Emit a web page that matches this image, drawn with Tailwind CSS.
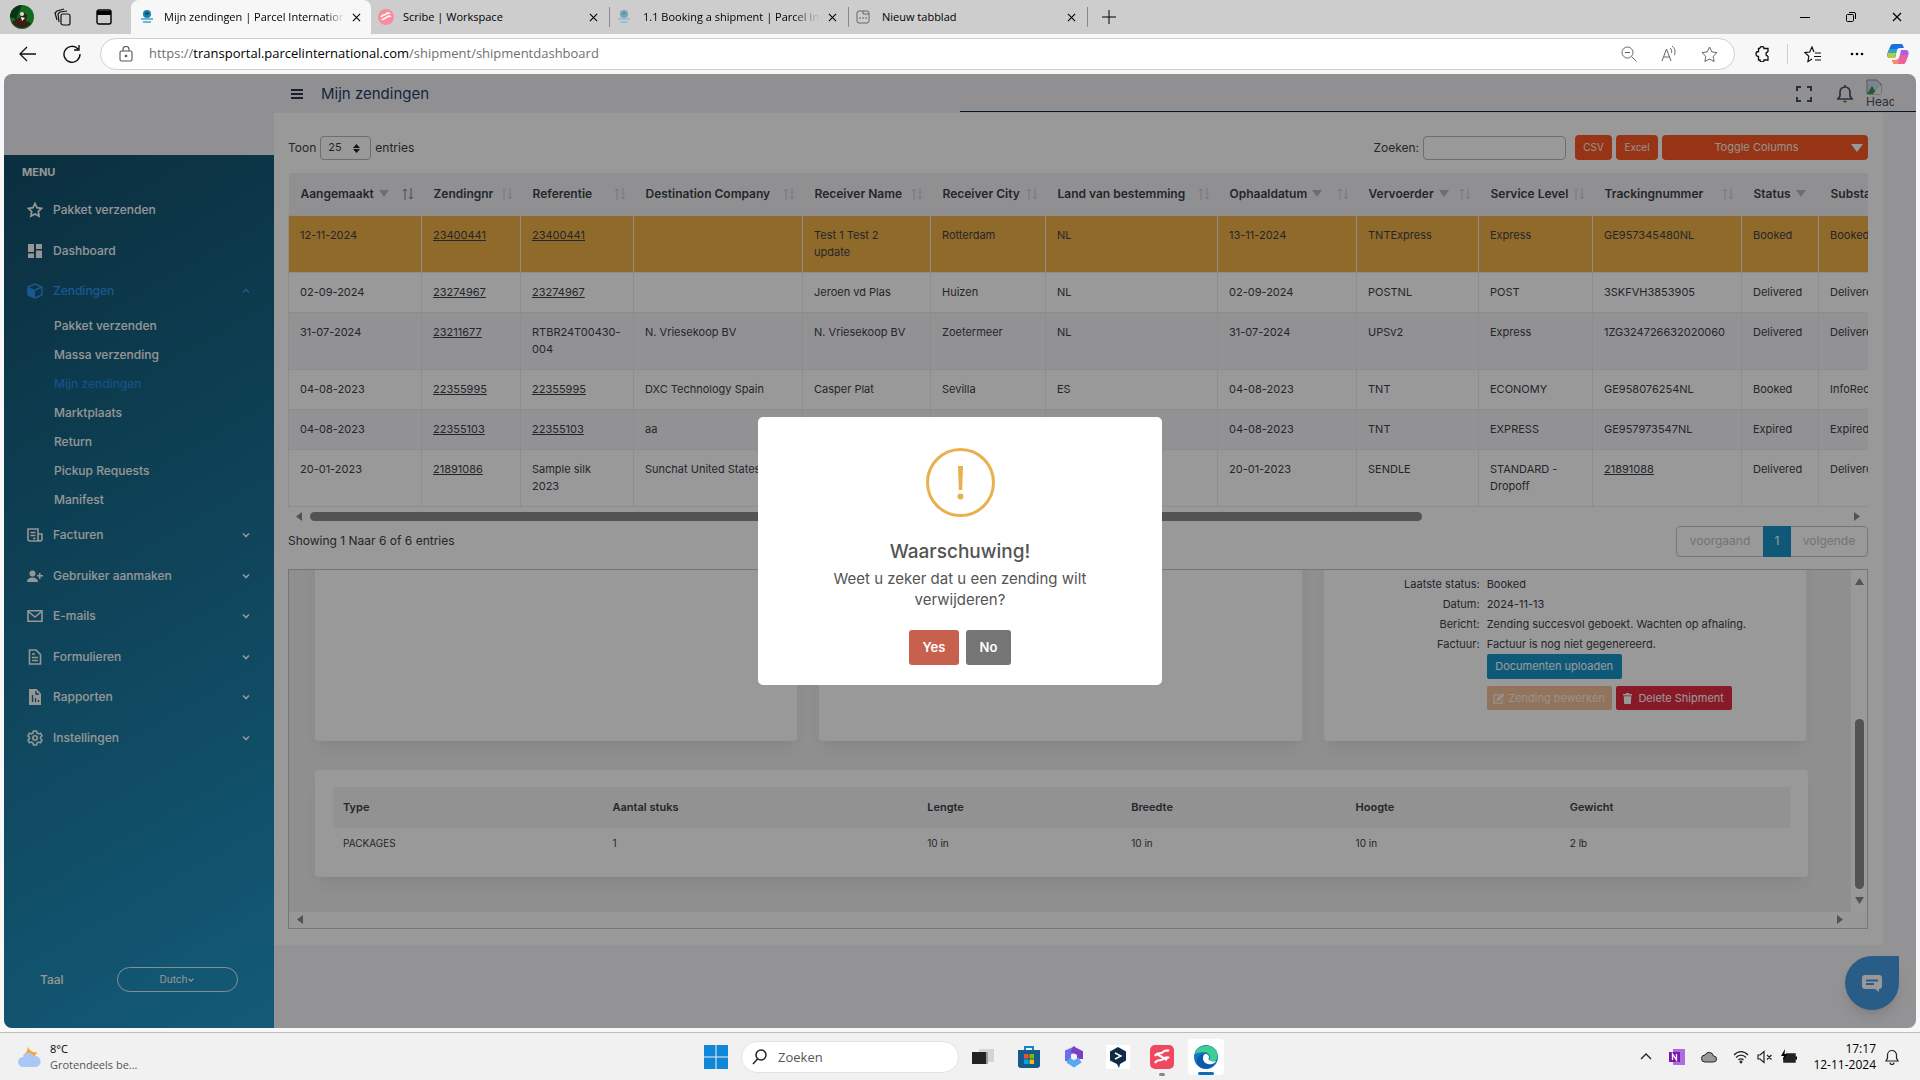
<!DOCTYPE html>
<html lang="nl">
<head>
    <meta charset="UTF-8">
    <meta name="viewport" content="width=device-width, initial-scale=1.0">
    <title>Mijn zendingen | Parcel International</title>
    <script src="https://cdn.jsdelivr.net/npm/@tailwindcss/browser@4"></script>
</head>
<body class="min-h-screen flex flex-col bg-[#f7f7f7] font-['Open_Sans','Noto_Sans',sans-serif] text-xs text-black">

    <!-- Shared icons -->
    <svg class="hidden">
        <symbol id="sort" viewBox="0 0 12 12"><path d="M3 12V1M1 3l2-2 2 2M9 0v11M7 9l2 2 2-2" fill="none" stroke="currentColor"/></symbol>
        <symbol id="chevron" viewBox="0 0 10 10"><path d="M2 3.5 5 6.5 8 3.5" fill="none" stroke="currentColor" stroke-width="1.6"/></symbol>
        <symbol id="close" viewBox="0 0 10 10"><path d="M1 1l8 8M9 1 1 9" fill="none" stroke="currentColor" stroke-width="1.2"/></symbol>
        <symbol id="parcel" viewBox="0 0 14 14"><circle cx="7" cy="4" r="4" fill="#1c7fae"/><path d="M5 3l3-1 1 2-3 1z" fill="#0b4564"/><path d="M1 9h12M3 12h8" stroke="#6fb6d8" stroke-width="2"/></symbol>
    </svg>

    <!-- Tab strip -->
    <div class="h-[34px] bg-[#cdcdcd] flex items-center text-[11px]">
        <div class="w-[131px] shrink-0 flex items-center gap-5 pl-[10px]">
            <svg class="w-6 h-6" viewBox="0 0 24 24"><circle cx="12" cy="12" r="12" fill="#126b22"/><path d="M2 18c3-4 5-5 8-5l3-6 4 3-1 6 5 2c-3 5-12 8-19 0z" fill="#3a1d14"/><circle cx="12" cy="9" r="2" fill="#ecdcd0"/><path d="M11 12l4 1-3 3z" fill="#fff"/><path d="M0 12a12 12 0 0 1 12-12L6 14z" fill="#0b3312"/></svg>
            <svg class="w-[18px] h-[18px]" viewBox="0 0 18 18" fill="none" stroke="#111" stroke-width="1.2"><rect x="7" y="6" width="9" height="11" rx="2"/><path d="M5 14l-1-8 2-2 7-1M3 12 1 5l2-2 7-2"/></svg>
            <svg class="w-4 h-4 ml-1" viewBox="0 0 16 16"><rect x="1" y="1" width="14" height="14" rx="2" fill="none" stroke="#000" stroke-width="1.4"/><path d="M1 2h14v4H1z"/></svg>
        </div>
        <div class="h-full w-[240px] shrink-0 bg-[#f7f7f7] rounded-t-lg flex items-center px-[9px]">
            <svg class="w-[14px] h-[14px] mr-[10px] shrink-0"><use href="#parcel"/></svg>
            <span class="flex-1 overflow-hidden whitespace-nowrap mask-r-from-90%">Mijn zendingen | Parcel International</span>
            <button class="ml-2 mr-px" aria-label="Tabblad sluiten"><svg class="w-[9px] h-[9px]"><use href="#close"/></svg></button>
        </div>
        <div class="h-5 w-[239px] shrink-0 border-r border-[#8a8a8a] flex items-center px-[7px]">
            <svg class="w-4 h-4 mr-[9px] shrink-0" viewBox="0 0 16 16"><circle cx="8" cy="8" r="8" fill="#f78ca0"/><path d="M3 8c2-3 3-1 5-3s3 0 4-1M4 11c2-2 3-1 5-3s3 0 4-1" stroke="#fff" stroke-width="1.6" fill="none"/></svg>
            <span class="flex-1">Scribe | Workspace</span>
            <button class="mr-1" aria-label="Tabblad sluiten"><svg class="w-[9px] h-[9px]"><use href="#close"/></svg></button>
        </div>
        <div class="h-5 w-[239px] shrink-0 border-r border-[#8a8a8a] flex items-center px-[7px]">
            <svg class="w-[14px] h-[14px] mr-3 shrink-0 opacity-50"><use href="#parcel"/></svg>
            <span class="flex-1 overflow-hidden whitespace-nowrap mask-r-from-85%">1.1 Booking a shipment | Parcel International</span>
            <button class="ml-2 mr-1" aria-label="Tabblad sluiten"><svg class="w-[9px] h-[9px]"><use href="#close"/></svg></button>
        </div>
        <div class="h-5 w-[239px] shrink-0 border-r border-[#8a8a8a] flex items-center px-[7px]">
            <svg class="w-[14px] h-[14px] mr-3 shrink-0" viewBox="0 0 14 14" fill="none" stroke="#666"><rect x="1" y="1" width="12" height="12" rx="2"/><path d="M7 1v3h6M3 8h2M6 8h2M9 8h2"/></svg>
            <span class="flex-1">Nieuw tabblad</span>
            <button class="mr-1" aria-label="Tabblad sluiten"><svg class="w-[9px] h-[9px]"><use href="#close"/></svg></button>
        </div>
        <button class="ml-[14px]" aria-label="Nieuw tabblad"><svg class="w-[14px] h-[14px]" viewBox="0 0 14 14" stroke="#000"><path d="M7 0v14M0 7h14"/></svg></button>
        <div class="ml-auto flex items-center gap-9 pr-[18px]">
            <button aria-label="Minimaliseren"><svg class="w-[10px] h-[10px]" viewBox="0 0 10 10" stroke="#000"><path d="M0 5.5h10"/></svg></button>
            <button aria-label="Verkleinen"><svg class="w-[10px] h-[10px]" viewBox="0 0 10 10" stroke="#000" fill="none"><rect x=".5" y="2.5" width="7" height="7" rx="1"/><path d="M3 .5h5a1.500 1.500 0 0 1 1.500 1.500v5"/></svg></button>
            <button aria-label="Sluiten"><svg class="w-[10px] h-[10px]"><use href="#close"/></svg></button>
        </div>
    </div>

    <!-- Address bar -->
    <div class="h-10 flex items-center">
        <div class="w-[100px] shrink-0 flex gap-[26px] pl-[19px]">
            <button aria-label="Terug"><svg class="w-[18px] h-4" viewBox="0 0 18 16" fill="none" stroke="#111" stroke-width="1.3"><path d="M17 8H1M8 1 1 8l7 7"/></svg></button>
            <button aria-label="Vernieuwen"><svg class="w-[18px] h-[18px]" viewBox="0 0 18 18" fill="none" stroke="#111" stroke-width="1.4"><path d="M15 4a8 8 0 1 0 2 5M16 0v5h-5"/></svg></button>
        </div>
        <div class="flex-1 h-8 bg-white border border-[#d0d0d0] rounded-full flex items-center pl-[18px] pr-4 text-[13px]">
            <svg class="w-[14px] h-4 mr-4" viewBox="0 0 14 16" fill="none" stroke="#555" stroke-width="1.1"><rect x="1" y="5" width="12" height="10" rx="1.500"/><path d="M4 5V3.500a3 3 0 0 1 6 0V5"/><circle cx="7" cy="10" r=".8" fill="#555"/></svg>
            <span class="flex-1 text-[#707070]">https://<span class="text-black">transportal.parcelinternational.com</span>/shipment/shipmentdashboard</span>
            <div class="flex items-center gap-6 text-[#666]">
                <svg class="w-4 h-4" viewBox="0 0 16 16" fill="none" stroke="currentColor"><circle cx="6.500" cy="6.500" r="5.500"/><path d="M10.500 10.500l5 5M4 6.500h5"/></svg>
                <svg class="w-4 h-4" viewBox="0 0 16 16" fill="none" stroke="currentColor"><path d="M1 15 5.500 3 10 15M2.500 11h6M9 2c1.500 1 2 3 1.500 5M11 0c3 2 3.500 5 2.500 9"/></svg>
                <svg class="w-[17px] h-[17px]" viewBox="0 0 17 17" fill="none" stroke="currentColor"><path d="M8.500 1l2.300 4.900 5.200.7-3.800 3.700.9 5.200-4.600-2.500-4.600 2.500.9-5.200L1 6.600l5.200-.7z"/></svg>
            </div>
        </div>
        <div class="flex items-center pl-5 pr-[11px]">
            <svg class="w-4 h-4" viewBox="0 0 16 16" fill="none" stroke="#111" stroke-width="1.300"><path d="M5 2.500a2 2 0 0 1 4 0h4V6M13 10v4H9a2 2 0 0 1-4 0H3.500v-3.500a2 2 0 0 1 0-5V2.500H5M13 6a2 2 0 0 0 0 4"/></svg>
            <div class="w-px h-5 bg-[#d0d0d0] mx-4"></div>
            <svg class="w-[17px] h-[17px]" viewBox="0 0 17 17" fill="none" stroke="#111" stroke-width="1.200"><path d="M10 6 8 1 5.700 6 1 6.600l3.800 3.700-.9 5.200L8 13M11 7h6M10 10.500h7M11 14h6"/></svg>
            <svg class="w-4 h-4 ml-7 mr-[22px]" viewBox="0 0 16 16"><circle cx="3" cy="8" r="1.300"/><circle cx="8" cy="8" r="1.300"/><circle cx="13" cy="8" r="1.300"/></svg>
            <svg class="w-[22px] h-[22px]" viewBox="0 0 22 22"><path d="M6 1h8c2 0 2 2 3 4h-4c-2 0-3 1-3.500 3L8 15H3C0 15 0 12 1 9l2-5c.6-2 1.500-3 3-3z" fill="#1c6fe0"/><path d="M2 6h8l-2 9H3C0 15 0 12 1 9z" fill="#28a6c8"/><path d="M1 10h8l-1 5H3c-2 0-3-2-2-5z" fill="#b9c83c"/><path d="M16 21H8c-2 0-2-2-3-4h4c2 0 3-1 3.500-3L14 7h5c3 0 3 3 2 6l-2 5c-.6 2-1.500 3-3 3z" fill="#a95fe8"/><path d="M13 12h8.300l-2.300 6c-.6 2-1.500 3-3 3H8c-2 0-2-2-3-4h4c2 0 3-1 3.500-3z" fill="#f0609a"/><path d="M5 17h4c2 0 3-1 3.500-3L11 21H8c-2 0-2-2-3-4z" fill="#fb8a5c"/></svg>
        </div>
    </div>

    <!-- Web page -->
    <div class="relative flex-1 flex mx-1 mb-1 rounded-lg overflow-hidden bg-[#f5f5f8] font-['Inter',sans-serif] text-[#3c4147]">

        <!-- Sidebar -->
        <aside class="w-[270px] shrink-0 flex flex-col bg-[#f1f1f4]">
            <div class="h-[81px]"></div>
            <nav class="flex-1 flex flex-col bg-linear-150 from-[#124f69] to-[#2098c8] text-[#fafafa] font-medium">
                <p class="h-[34px] pt-2 pl-[18px] text-[11px] leading-[18px] font-bold">MENU</p>
                <a href="#" class="h-[41px] flex items-center gap-[10px] px-[23px]">
                    <svg class="w-4 h-4" viewBox="0 0 16 16" fill="none" stroke="currentColor" stroke-width="1.700"><path d="M8 1.500l2 4.200 4.600.6-3.300 3.200.8 4.600L8 11.900l-4.100 2.200.8-4.600L1.400 6.300 6 5.700z"/></svg>
                    Pakket verzenden
                </a>
                <a href="#" class="h-[41px] flex items-center gap-[10px] px-[23px]">
                    <svg class="w-4 h-4" viewBox="0 0 16 16" fill="currentColor"><path d="M1 1h6v8H1zM9 1h6v5H9zM1 10.500h6V15H1zM9 7.500h6V15H9z"/></svg>
                    Dashboard
                </a>
                <a href="#" class="h-10 flex items-center gap-[10px] px-[23px] text-[#2b95f0]">
                    <svg class="w-4 h-4" viewBox="0 0 16 16"><path d="M8 1l7 3v8l-7 3-7-3V4z" fill="none" stroke="currentColor" stroke-width="1.400"/><path d="M1 4l7 3v8l-7-3z" fill="currentColor"/><path d="M8 7l7-3" stroke="currentColor" stroke-width="1.400"/></svg>
                    <span class="flex-1">Zendingen</span>
                    <svg class="w-[10px] h-[10px] rotate-180"><use href="#chevron"/></svg>
                </a>
                <ul class="pl-[50px] leading-[29px]">
                    <li><a href="#">Pakket verzenden</a></li>
                    <li><a href="#">Massa verzending</a></li>
                    <li><a href="#" class="text-[#2388e0]">Mijn zendingen</a></li>
                    <li><a href="#">Marktplaats</a></li>
                    <li><a href="#">Return</a></li>
                    <li><a href="#">Pickup Requests</a></li>
                    <li><a href="#">Manifest</a></li>
                </ul>
                <a href="#" class="h-[41px] flex items-center gap-[10px] px-[23px]">
                    <svg class="w-4 h-4" viewBox="0 0 16 16" fill="none" stroke="currentColor" stroke-width="1.600"><path d="M1 2h10v12H3a2 2 0 0 1-2-2zM11 7h4v5a2 2 0 0 1-4 0M3.500 5.500h5M3.500 8.500h5M6 11.500h2.500"/></svg>
                    <span class="flex-1">Facturen</span>
                    <svg class="w-[10px] h-[10px]"><use href="#chevron"/></svg>
                </a>
                <a href="#" class="h-[41px] flex items-center gap-[10px] px-[23px]">
                    <svg class="w-4 h-4" viewBox="0 0 16 16" fill="currentColor"><circle cx="5.500" cy="5.500" r="3"/><path d="M0 14c0-6 11-6 11 0zM12 5h1.500v2H16v1.500h-2.500V11H12V8.500h-2V7h2z"/></svg>
                    <span class="flex-1">Gebruiker aanmaken</span>
                    <svg class="w-[10px] h-[10px]"><use href="#chevron"/></svg>
                </a>
                <a href="#" class="h-10 flex items-center gap-[10px] px-[23px]">
                    <svg class="w-4 h-4" viewBox="0 0 16 16" fill="none" stroke="currentColor" stroke-width="1.600"><path d="M1 2.800h14v10.400H1zM2 4l6 5 6-5"/></svg>
                    <span class="flex-1">E-mails</span>
                    <svg class="w-[10px] h-[10px]"><use href="#chevron"/></svg>
                </a>
                <a href="#" class="h-[41px] flex items-center gap-[10px] px-[23px]">
                    <svg class="w-4 h-4" viewBox="0 0 16 16" fill="none" stroke="currentColor" stroke-width="1.600"><path d="M2.500 1H9l4.500 4.500V15h-11zM5 5h3M5 8.500h6M5 11.500h6"/></svg>
                    <span class="flex-1">Formulieren</span>
                    <svg class="w-[10px] h-[10px]"><use href="#chevron"/></svg>
                </a>
                <a href="#" class="h-10 flex items-center gap-[10px] px-[23px]">
                    <svg class="w-4 h-4" viewBox="0 0 16 16"><path d="M2 0h7.500L14 4.500V16H2z" fill="currentColor"/><path d="M5.500 6v7M8.500 9v4M11.500 11v2M9 2v3h3" fill="none" stroke="#1a6586" stroke-width="1.300"/></svg>
                    <span class="flex-1">Rapporten</span>
                    <svg class="w-[10px] h-[10px]"><use href="#chevron"/></svg>
                </a>
                <a href="#" class="h-[41px] flex items-center gap-[10px] px-[23px]">
                    <svg class="w-4 h-4" viewBox="0 0 16 16" fill="none" stroke="currentColor" stroke-width="1.600"><path d="M6.500 1h3l.5 2 1.500.9 2-.6L15 5.900 13.500 7.300v1.400L15 10.100l-1.500 2.600-2-.6L10 13l-.5 2h-3L6 13l-1.500-.9-2 .6L1 10.100l1.500-1.400V7.300L1 5.900l1.500-2.600 2 .6L6 3z"/><circle cx="8" cy="8" r="2.200"/></svg>
                    <span class="flex-1">Instellingen</span>
                    <svg class="w-[10px] h-[10px]"><use href="#chevron"/></svg>
                </a>
                <div class="mt-auto mb-9 pl-9 pr-9 flex items-center justify-between">
                    <span>Taal</span>
                    <button class="w-[121px] h-[25px] border border-[#e0f0f5] rounded-full flex items-center justify-center text-[10px] font-normal">Dutch <svg class="w-2 h-2"><use href="#chevron"/></svg></button>
                </div>
            </nav>
        </aside>

        <!-- Main column -->
        <main class="flex-1 min-w-0">
            <header class="h-[39px] flex items-center bg-[#f1f1f4] pl-[17px]">
                <button aria-label="Menu"><svg class="w-3 h-3" viewBox="0 0 12 12" stroke="#2b3350" stroke-width="2"><path d="M0 2h12M0 6h12M0 10h12"/></svg></button>
                <h1 class="ml-[18px] text-[15px] text-[#1f3d66]">Mijn zendingen</h1>
                <div class="ml-auto flex items-center gap-6 pr-[22px] text-[#4a4f5c]">
                    <svg class="w-4 h-4" viewBox="0 0 16 16" fill="none" stroke="currentColor" stroke-width="2"><path d="M1 5V1h4M11 1h4v4M15 11v4h-4M5 15H1v-4"/></svg>
                    <svg class="w-[18px] h-[18px]" viewBox="0 0 18 18" fill="none" stroke="currentColor" stroke-width="1.700"><path d="M2 14h14l-2-3V7A5 5 0 0 0 4 7v4zM7.500 16.500h3M9 2V0"/></svg>
                    <div class="w-7 -ml-3 overflow-hidden text-xs leading-[14px]">
                        <svg class="w-4 h-4" viewBox="0 0 16 16"><path d="M1 1h10l4 4v10H1z" fill="#c9dcf0" stroke="#8a8f96"/><path d="M1 15l5-8 5 8z" fill="#3a9a4a"/><path d="M15 6l-8 9h8z" fill="#f1f1f4"/></svg>
                        Header
                    </div>
                </div>
            </header>

            <div class="relative mr-[33px] bg-white pl-[14px] pr-[15px] pt-[22px] pb-4">
                <div class="absolute top-[-2px] left-[686px] right-[-33px] h-px bg-[#0c2746]"></div>

                <!-- Table toolbar -->
                <div class="flex items-center gap-1 h-[25px]">
                    <label for="page-size">Toon</label>
                    <div class="relative">
                        <select id="page-size" class="appearance-none w-[51px] h-6 border border-[#b5b8bd] rounded-sm pl-[7px] text-[11px] bg-white"><option>25</option></select>
                        <svg class="absolute right-[11px] top-2 w-[7px] h-[9px] pointer-events-none" viewBox="0 0 7 9"><path d="M3.500 0 7 4H0zM0 5h7L3.500 9z" fill="#222"/></svg>
                    </div>
                    <span>entries</span>
                    <label for="search" class="ml-auto">Zoeken:</label>
                    <input id="search" type="text" class="w-[143px] h-6 border border-[#b5b8bd] rounded-sm bg-white px-2">
                    <button class="ml-[5px] w-[37px] h-[25px] rounded-sm bg-[#fa5824] text-[#fff0ea] text-[10px]">CSV</button>
                    <button class="w-[42px] h-[25px] rounded-sm bg-[#fa5824] text-[#fff0ea] text-[10px]">Excel</button>
                    <button class="w-[206px] h-[25px] rounded-sm bg-[#fa5824] text-[#fff0ea] text-[11px] flex items-center pr-[5px]">
                        <span class="flex-1">Toggle Columns</span>
                        <svg class="w-3 h-2" viewBox="0 0 12 8"><path d="M0 0h12L6 8z" fill="#fff"/></svg>
                    </button>
                </div>

                <!-- Shipments -->
                <div class="mt-[13px] overflow-hidden">
                    <table class="table-fixed w-[1681px] border-collapse text-left text-[11px] leading-[17px] [&_td]:border [&_td]:border-[#ececef] [&_td]:px-[11px] [&_td]:py-[11px] [&_td]:align-top [&_th]:pl-3 [&_th]:pr-2 [&_th]:font-semibold [&_td_a]:underline">
                        <colgroup>
                            <col class="w-[133px]"><col class="w-[99px]"><col class="w-[113px]"><col class="w-[169px]"><col class="w-[128px]"><col class="w-[115px]"><col class="w-[172px]"><col class="w-[139px]"><col class="w-[122px]"><col class="w-[114px]"><col class="w-[149px]"><col class="w-[77px]"><col class="w-[151px]">
                        </colgroup>
                        <thead class="bg-[#f1f1f4] text-xs">
                            <tr class="h-[42px] whitespace-nowrap">
                                <th><div class="flex items-center">Aangemaakt<svg class="w-[10px] h-[7px] ml-[5px]" viewBox="0 0 10 7"><path d="M0 0h10L5 7z" fill="#b4b7bb"/></svg><svg class="w-3 h-3 ml-auto text-[#777b80]"><use href="#sort"/></svg></div></th>
                                <th><div class="flex items-center">Zendingnr<svg class="w-3 h-3 ml-auto text-[#c8c9cd]"><use href="#sort"/></svg></div></th>
                                <th><div class="flex items-center">Referentie<svg class="w-3 h-3 ml-auto text-[#c8c9cd]"><use href="#sort"/></svg></div></th>
                                <th><div class="flex items-center">Destination Company<svg class="w-3 h-3 ml-auto text-[#c8c9cd]"><use href="#sort"/></svg></div></th>
                                <th><div class="flex items-center">Receiver Name<svg class="w-3 h-3 ml-auto text-[#c8c9cd]"><use href="#sort"/></svg></div></th>
                                <th><div class="flex items-center">Receiver City<svg class="w-3 h-3 ml-auto text-[#c8c9cd]"><use href="#sort"/></svg></div></th>
                                <th><div class="flex items-center">Land van bestemming<svg class="w-3 h-3 ml-auto text-[#c8c9cd]"><use href="#sort"/></svg></div></th>
                                <th><div class="flex items-center">Ophaaldatum<svg class="w-[10px] h-[7px] ml-[5px]" viewBox="0 0 10 7"><path d="M0 0h10L5 7z" fill="#b4b7bb"/></svg><svg class="w-3 h-3 ml-auto text-[#c8c9cd]"><use href="#sort"/></svg></div></th>
                                <th><div class="flex items-center">Vervoerder<svg class="w-[10px] h-[7px] ml-[5px]" viewBox="0 0 10 7"><path d="M0 0h10L5 7z" fill="#b4b7bb"/></svg><svg class="w-3 h-3 ml-auto text-[#c8c9cd]"><use href="#sort"/></svg></div></th>
                                <th><div class="flex items-center">Service Level<svg class="w-3 h-3 ml-auto text-[#c8c9cd]"><use href="#sort"/></svg></div></th>
                                <th><div class="flex items-center">Trackingnummer<svg class="w-3 h-3 ml-auto text-[#c8c9cd]"><use href="#sort"/></svg></div></th>
                                <th><div class="flex items-center">Status<svg class="w-[10px] h-[7px] ml-[5px]" viewBox="0 0 10 7"><path d="M0 0h10L5 7z" fill="#b4b7bb"/></svg></div></th>
                                <th>Substatus</th>
                            </tr>
                        </thead>
                        <tbody>
                            <tr class="bg-[#efb148]"><td>12-11-2024</td><td><a href="#">23400441</a></td><td><a href="#">23400441</a></td><td></td><td>Test 1 Test 2<br>update</td><td>Rotterdam</td><td>NL</td><td>13-11-2024</td><td>TNTExpress</td><td>Express</td><td>GE957345480NL</td><td>Booked</td><td>Booked</td></tr>
                            <tr><td>02-09-2024</td><td><a href="#">23274967</a></td><td><a href="#">23274967</a></td><td></td><td>Jeroen vd Plas</td><td>Huizen</td><td>NL</td><td>02-09-2024</td><td>POSTNL</td><td>POST</td><td>3SKFVH3853905</td><td>Delivered</td><td>Delivered</td></tr>
                            <tr class="bg-[#f4f4f7]"><td>31-07-2024</td><td><a href="#">23211677</a></td><td>RTBR24T00430-<br>004</td><td>N. Vriesekoop BV</td><td>N. Vriesekoop BV</td><td>Zoetermeer</td><td>NL</td><td>31-07-2024</td><td>UPSv2</td><td>Express</td><td class="whitespace-nowrap">1ZG324726632020060</td><td>Delivered</td><td>Delivered</td></tr>
                            <tr><td>04-08-2023</td><td><a href="#">22355995</a></td><td><a href="#">22355995</a></td><td>DXC Technology Spain</td><td>Casper Plat</td><td>Sevilla</td><td>ES</td><td>04-08-2023</td><td>TNT</td><td>ECONOMY</td><td>GE958076254NL</td><td>Booked</td><td>InfoReceived</td></tr>
                            <tr class="bg-[#f4f4f7]"><td>04-08-2023</td><td><a href="#">22355103</a></td><td><a href="#">22355103</a></td><td>aa</td><td></td><td></td><td></td><td>04-08-2023</td><td>TNT</td><td>EXPRESS</td><td>GE957973547NL</td><td>Expired</td><td>Expired</td></tr>
                            <tr><td>20-01-2023</td><td><a href="#">21891086</a></td><td>Sample silk<br>2023</td><td class="whitespace-nowrap">Sunchat United States</td><td></td><td></td><td></td><td>20-01-2023</td><td>SENDLE</td><td>STANDARD -<br>Dropoff</td><td><a href="#">21891088</a></td><td>Delivered</td><td>Delivered</td></tr>
                        </tbody>
                    </table>
                </div>
                <div class="mt-[2px] h-4 flex items-center px-2 gap-2">
                    <svg class="w-[6px] h-[9px]" viewBox="0 0 6 9"><path d="M6 0v9L0 4.500z" fill="#8a8a8a"/></svg>
                    <div class="flex-1"><div class="w-[72.400%] h-[9px] rounded-full bg-[#8a8a8a]"></div></div>
                    <svg class="w-[6px] h-[9px]" viewBox="0 0 6 9"><path d="M0 0v9l6-4.500z" fill="#8a8a8a"/></svg>
                </div>
                <div class="mt-px flex items-center justify-between">
                    <p>Showing 1 Naar 6 of 6 entries</p>
                    <div class="h-[31px] flex border border-[#c3c5c9] rounded-sm text-xs text-[#c0c2c5]">
                        <button class="w-[86px]">voorgaand</button>
                        <button class="w-7 -my-px bg-[#1b93c6] text-white">1</button>
                        <button class="w-[76px]">volgende</button>
                    </div>
                </div>

                <!-- Shipment details -->
                <section class="mt-3 border border-[#c3c5c9] text-[11px]">
                    <div class="h-[342px] flex">
                        <div class="flex-1 h-full overflow-hidden flex flex-col justify-end bg-[#eeeeee] pl-[26px] pr-[43px] pb-[35px]">
                            <div class="shrink-0 grid grid-cols-3 gap-[22px] mr-[2px]">
                                <div class="bg-white rounded-sm shadow-lg shadow-black/5"></div>
                                <div class="bg-white rounded-sm shadow-lg shadow-black/5"></div>
                                <div class="bg-white rounded-sm shadow-lg shadow-black/5 pt-6 pb-[31px]">
                                    <dl class="grid grid-cols-[156px_1fr] gap-x-[7px] leading-5 [&>dt]:text-right">
                                        <dt>Laatste status:</dt><dd>Booked</dd>
                                        <dt>Datum:</dt><dd>2024-11-13</dd>
                                        <dt>Bericht:</dt><dd>Zending succesvol geboekt. Wachten op afhaling.</dd>
                                        <dt>Factuur:</dt><dd>Factuur is nog niet gegenereerd.</dd>
                                    </dl>
                                    <div class="pl-[163px]">
                                        <button class="w-[135px] h-[25px] rounded-xs bg-[#1a95c8] text-white">Documenten uploaden</button>
                                        <div class="mt-[7px] flex gap-1">
                                            <button class="w-[125px] h-6 rounded-xs bg-[#f3c19b] text-[#fdf1e6] flex items-center justify-center gap-1">
                                                <svg class="w-[11px] h-[11px]" viewBox="0 0 12 12" fill="none" stroke="currentColor" stroke-width="1.500"><path d="M7 2H1v9h9V7"/><path d="M4.500 8l.5-2 5-5 1.500 1.500-5 5z" fill="currentColor"/></svg>
                                                Zending bewerken
                                            </button>
                                            <button class="w-[116px] h-6 rounded-xs bg-[#e32b42] text-white flex items-center justify-center gap-[6px]">
                                                <svg class="w-[9px] h-[11px]" viewBox="0 0 9 11" fill="currentColor"><path d="M0 1h3V0h3v1h3v1.500H0zM.7 3.300h7.600L7.800 11H1.200z"/></svg>
                                                Delete Shipment
                                            </button>
                                        </div>
                                    </div>
                                </div>
                            </div>
                            <div class="shrink-0 mt-[29px] bg-white rounded-sm shadow-lg shadow-black/5 pt-[17px] px-[18px] pb-[26px]">
                                <table class="w-full table-fixed text-left [&_th]:pl-[10px] [&_td]:pl-[10px]">
                                    <colgroup><col class="w-[18.500%]"><col class="w-[21.600%]"><col class="w-[14%]"><col class="w-[15.400%]"><col class="w-[14.700%]"><col></colgroup>
                                    <thead class="bg-[#f3f3f6]">
                                        <tr class="h-[41px]"><th class="font-semibold">Type</th><th class="font-semibold">Aantal stuks</th><th class="font-semibold">Lengte</th><th class="font-semibold">Breedte</th><th class="font-semibold">Hoogte</th><th class="font-semibold">Gewicht</th></tr>
                                    </thead>
                                    <tbody class="text-[10px]">
                                        <tr><td class="pt-[9px]">PACKAGES</td><td class="pt-[9px]">1</td><td class="pt-[9px]">10 in</td><td class="pt-[9px]">10 in</td><td class="pt-[9px]">10 in</td><td class="pt-[9px]">2 lb</td></tr>
                                    </tbody>
                                </table>
                            </div>
                        </div>
                        <div class="w-4 flex flex-col items-center py-2 bg-white">
                            <svg class="w-[9px] h-[7px]" viewBox="0 0 9 7"><path d="M0 7h9L4.500 0z" fill="#8a8a8a"/></svg>
                            <div class="mt-auto mb-2 w-[9px] h-[170px] rounded-full bg-[#8a8a8a]"></div>
                            <svg class="w-[9px] h-[7px]" viewBox="0 0 9 7"><path d="M0 0h9L4.500 7z" fill="#8a8a8a"/></svg>
                        </div>
                    </div>
                    <div class="h-4 bg-[#fdfdfd] flex items-center justify-between pl-2 pr-6">
                        <svg class="w-[6px] h-[9px]" viewBox="0 0 6 9"><path d="M6 0v9L0 4.500z" fill="#8a8a8a"/></svg>
                        <svg class="w-[6px] h-[9px]" viewBox="0 0 6 9"><path d="M0 0v9l6-4.500z" fill="#8a8a8a"/></svg>
                    </div>
                </section>
            </div>
        </main>

        <!-- Chat bubble -->
        <button aria-label="Chat" class="absolute right-[17px] bottom-[18px] w-[54px] h-[54px] rounded-full rounded-tr-lg bg-[#4599e2] shadow-lg flex items-center justify-center">
            <svg class="w-5 h-5" viewBox="0 0 20 20"><path d="M3 2h14a3 3 0 0 1 3 3v8a3 3 0 0 1-3 3v3l-4-3H3a3 3 0 0 1-3-3V5a3 3 0 0 1 3-3z" fill="#fff"/><path d="M4 7.500h12M4 11h8" stroke="#4599e2" stroke-width="1.800"/></svg>
        </button>

        <!-- Confirm dialog -->
        <div class="absolute inset-0 bg-black/40 flex items-center justify-center">
            <div role="dialog" aria-labelledby="dialog-title" class="w-[404px] bg-white rounded-[5px] pt-[31px] pb-5 flex flex-col items-center text-[#545454]">
                <svg class="w-[69px] h-[69px]" viewBox="0 0 69 69"><circle cx="34.500" cy="34.500" r="33" fill="none" stroke="#e8b04f" stroke-width="3"/><path d="M32 18h5l-.8 24h-3.400z" fill="#e8b04f"/><circle cx="34.500" cy="48.500" r="3" fill="#e8b04f"/></svg>
                <h2 id="dialog-title" class="mt-[23px] text-[19px] leading-6 font-medium">Waarschuwing!</h2>
                <p class="mt-1 w-[300px] text-center text-[15px] leading-[21px]">Weet u zeker dat u een zending wilt verwijderen?</p>
                <div class="mt-5 flex gap-[7px]">
                    <button class="w-[50px] h-[35px] rounded-[3px] bg-[#c7604d] text-white text-[13px] font-semibold">Yes</button>
                    <button class="w-[45px] h-[35px] rounded-[3px] bg-[#757575] text-white text-[13px] font-semibold">No</button>
                </div>
            </div>
        </div>
    </div>

    <!-- Taskbar -->
    <footer class="h-12 grid grid-cols-[1fr_auto_1fr] items-center bg-[#f1f1f1] border-t border-[#bdbdbd] text-[11px] leading-4">
        <div class="flex items-center gap-2 pl-[18px]">
            <svg class="w-6 h-6" viewBox="0 0 24 24"><path d="M10 1c1 5 5 7 9 6a8 8 0 0 1-14 3c3-1 5-5 5-9z" fill="#f5a623"/><path d="M5 22a5 5 0 0 1 0-10 6 6 0 0 1 11-1 5.500 5.500 0 0 1 2 11z" fill="#a9c8f5"/></svg>
            <div>8°C<br><span class="text-[#555]">Grotendeels be...</span></div>
        </div>
        <div class="flex items-center pl-2">
            <svg class="w-6 h-6 mr-[13px]" viewBox="0 0 24 24" fill="#0f86d6"><path d="M0 0h11.500v11.500H0zM12.500 0H24v11.500H12.500zM0 12.500h11.500V24H0zM12.500 12.500H24V24H12.500z"/></svg>
            <label class="w-[218px] h-8 bg-white border border-[#e2e2e2] rounded-full flex items-center pl-[10px] mr-3">
                <svg class="w-4 h-4 mr-[10px]" viewBox="0 0 16 16" fill="none" stroke="#222" stroke-width="1.500"><circle cx="9" cy="6" r="5"/><path d="M5.500 10 1 15"/></svg>
                <input type="text" aria-label="Zoeken" placeholder="Zoeken" class="w-36 text-[13px] placeholder:text-[#555] outline-none">
            </label>
            <svg class="w-6 h-6 mr-[22px]" viewBox="0 0 24 24"><path d="M8 4h15v13H8z" fill="#d4d4d4"/><path d="M1 7h14v12H1z" fill="#222"/><path d="M15 7h2v12h-2z" fill="#999"/></svg>
            <svg class="w-6 h-6 mr-[21px]" viewBox="0 0 24 24"><path d="M8 5V2h8v3" fill="none" stroke="#1683c4" stroke-width="2"/><path d="M1 5h22v15a3 3 0 0 1-3 3H4a3 3 0 0 1-3-3z" fill="#145a8c"/><path d="M7 9h4.500v4.500H7z" fill="#f25022"/><path d="M12.500 9H17v4.500h-4.500z" fill="#7fba00"/><path d="M7 14.500h4.500V19H7z" fill="#00a4ef"/><path d="M12.500 14.500H17V19h-4.500z" fill="#ffb900"/></svg>
            <svg class="w-6 h-6 mr-5" viewBox="0 0 24 24" fill="none" stroke-width="6"><path d="M14 4 6 7.500V16" stroke="#6b6ee8"/><path d="M10 4l8 4v6" stroke="#7b3fc4"/><path d="M6 15l6 4 6-4" stroke="#56a8f0"/></svg>
            <svg class="w-6 h-6 mr-5" viewBox="0 0 24 24"><path d="M0 0h24v24H0z" fill="#fff"/><path d="M12 2l8 4.500v9L14 19l-1 4-2-4-7-3.500v-9z" fill="#0f2b46"/><path d="M9 8l6 3-6 3" fill="none" stroke="#fff" stroke-width="1.400"/></svg>
            <div class="relative mr-[14px]">
                <svg class="w-6 h-6" viewBox="0 0 24 24"><rect width="24" height="24" rx="5" fill="#f0485e"/><path d="M5 11c3-5 5-1 8-4s4 0 6-2M5 18c3-5 5-1 8-4s4 0 6-2M7 9l10 6" fill="none" stroke="#fff" stroke-width="2.200"/></svg>
                <div class="absolute left-[9px] -bottom-[7px] w-[6px] h-[3px] rounded-full bg-[#888]"></div>
            </div>
            <div class="relative w-9 h-9 rounded bg-white flex items-center justify-center">
                <svg class="w-6 h-6" viewBox="0 0 24 24"><circle cx="12" cy="12" r="12" fill="#1377c8"/><path d="M1 9C3 1 12-1 18 2c6 4 7 10 4 13-2 2-6 1-7 0 3-3 0-8-5-8-4 0-7 1-9 2z" fill="#3fd08f"/><path d="M9 13c0 6 6 8 12 5-3 6-12 8-17 2-3-5 0-10 5-11 3 0 5 1 5 2-3-1-5 0-5 2z" fill="#0f5aa8"/><path d="M15 15c-1-1 0-2 0-3 0-2-2-3-4-3-3 1-3 9 3 10 4 1 7-1 8-3-3 1-6 0-7-1z" fill="#fff"/></svg>
                <div class="absolute left-[10px] bottom-0 w-4 h-[3px] rounded-full bg-[#0f6cbd]"></div>
            </div>
        </div>
        <div class="flex items-center justify-end pr-5">
            <svg class="w-3 h-3 rotate-180 mr-[17px]" viewBox="0 0 12 12"><path d="M1 4l5 5 5-5" fill="none" stroke="#222" stroke-width="1.300"/></svg>
            <svg class="w-4 h-4 mr-4" viewBox="0 0 16 16"><path d="M4 0h12v16H4z" fill="#b06be0"/><path d="M0 3h11v10H0z" fill="#7719aa"/><path d="M3.500 11V5l4 6V5" fill="none" stroke="#fff" stroke-width="1.300"/></svg>
            <svg class="w-4 h-4 mr-4" viewBox="0 0 16 16"><path d="M4 13a3.500 3.500 0 0 1 0-7 4.500 4.500 0 0 1 8.500 1A3 3 0 0 1 12.500 13z" fill="#999" stroke="#222"/></svg>
            <svg class="w-4 h-4 mr-2" viewBox="0 0 16 16" fill="none" stroke="#222" stroke-width="1.200"><path d="M1 6c4-4.500 10-4.500 14 0M3 8.500c3-3.200 7-3.200 10 0M5.500 11c1.500-1.600 3.500-1.600 5 0"/><circle cx="8" cy="13" r=".8" fill="#222"/></svg>
            <svg class="w-4 h-4 mr-2" viewBox="0 0 16 16" fill="none" stroke="#222" stroke-width="1.200"><path d="M1 6h2l4-3.500v11L3 10H1zM10 6l4.500 4.500M14.500 6 10 10.500"/></svg>
            <svg class="w-4 h-4 mr-4" viewBox="0 0 16 16"><path d="M5 5h9v8H3V8" fill="#222" stroke="#222" stroke-width="1.500"/><path d="M14.500 7.500H16v3h-1.500zM4 0 0 7h3l-1 5 4-7H3.500z"/></svg>
            <div class="text-right text-xs leading-4">17:17<br>12-11-2024</div>
            <svg class="w-4 h-4 ml-2" viewBox="0 0 16 16" fill="none" stroke="#222" stroke-width="1.200"><path d="M2 12h12l-1.500-3V6a4.500 4.500 0 0 0-9 0v3zM6 13.500a2 2 0 0 0 4 0"/></svg>
        </div>
    </footer>
</body>
</html>
